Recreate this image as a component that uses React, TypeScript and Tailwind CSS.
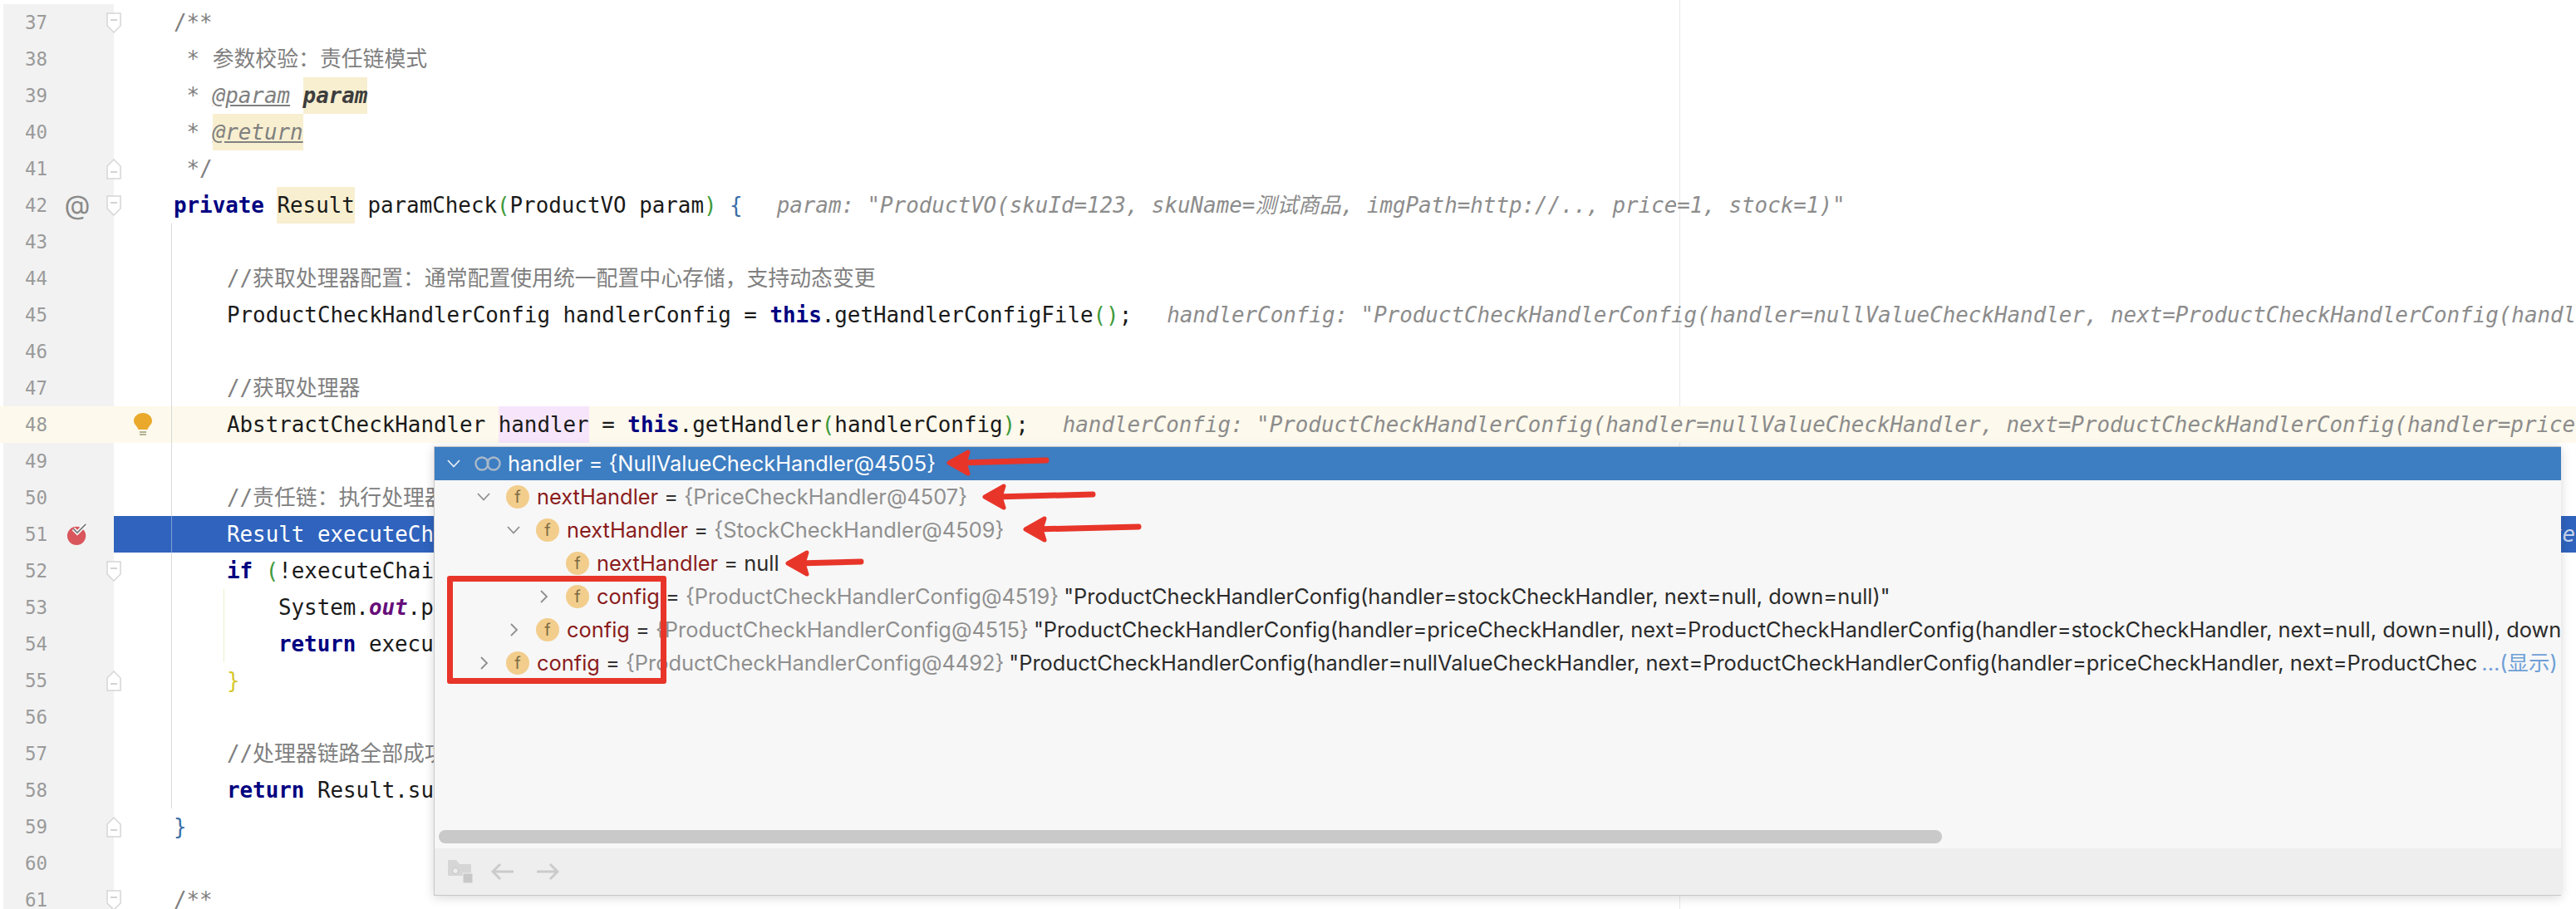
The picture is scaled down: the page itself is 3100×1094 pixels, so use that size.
import React from "react";

const mono = "font-['DejaVu_Sans_Mono','Noto_Sans_CJK_SC',monospace]";
const ui = "font-['Inter','Noto_Sans_CJK_SC',sans-serif]";

function Kw({ children }: { children: React.ReactNode }) {
  return <span className="font-bold text-[#000080]">{children}</span>;
}
function Cm({ children }: { children: React.ReactNode }) {
  return <span className="text-[#808080]">{children}</span>;
}
function Hint({ children, left = 41 }: { children: React.ReactNode; left?: number }) {
  return <span className={(left === 41 ? "ml-[41px]" : "ml-[42px]") + " italic text-[#8c8c8c]"}>{children}</span>;
}
function Green({ children }: { children: React.ReactNode }) {
  return <span className="text-[#3f9a3a]">{children}</span>;
}
function Hl({ children }: { children: React.ReactNode }) {
  return <span className="inline-block h-[44px] bg-[#f8efd0]">{children}</span>;
}

function Fold({ up }: { up?: boolean }) {
  return (
    <svg width="18" height="25" viewBox="0 0 18 25" className="absolute left-[128px] top-[10px]">
      <g transform={up ? "rotate(180 9 12.5)" : undefined}>
        <path d="M1 1H17V16L9 24L1 16Z" fill="#ffffff" stroke="#d6d6d6" strokeWidth="1.5" />
      </g>
      <path d={up ? "M5 16H13" : "M5 9H13"} stroke="#c4c4c4" strokeWidth="1.5" />
    </svg>
  );
}

function Bulb() {
  return (
    <svg width="24" height="30" viewBox="0 0 24 30">
      <path d="M12 1C5.5 1 1 5.5 1 10.5C1 15 5 16.5 6.5 21H17.5C19 16.5 23 15 23 10.5C23 5.5 18.5 1 12 1Z" fill="#eaa92b" />
      <path d="M8 24H16M8 27H16" stroke="#9a9a78" strokeWidth="1.6" />
    </svg>
  );
}

function Breakpoint() {
  return (
    <svg width="28" height="30" viewBox="0 0 28 30">
      <circle cx="13" cy="17" r="12" fill="#d9565c" />
      <path d="M9 8L14 13L25 2" fill="none" stroke="#ffffff" strokeWidth="5" />
      <path d="M9 8L14 13L25 2" fill="none" stroke="#7d7d7d" strokeWidth="2" />
    </svg>
  );
}

type Row = {
  n: number;
  fold?: "down" | "up";
  mark?: React.ReactNode;
  bulb?: boolean;
  guide?: boolean;
  inner?: boolean;
  bg?: string;
  indent: "a" | "b" | "c";
  code?: React.ReactNode;
};

const rows: Row[] = [
  { n: 37, fold: "down", indent: "a", code: <Cm>{"/**"}</Cm> },
  { n: 38, indent: "a", code: <Cm>{" * 参数校验：责任链模式"}</Cm> },
  {
    n: 39,
    indent: "a",
    code: (
      <Cm>
        {" * "}
        <span className="italic underline">@param</span>{" "}
        <span className="inline-block h-[44px] bg-[#f8efd0] font-bold italic text-[#3d3d3d]">param</span>
      </Cm>
    ),
  },
  {
    n: 40,
    indent: "a",
    code: (
      <Cm>
        {" * "}
        <span className="inline-block h-[44px] bg-[#f8efd0] italic underline">@return</span>
      </Cm>
    ),
  },
  { n: 41, fold: "up", indent: "a", code: <Cm>{" */"}</Cm> },
  {
    n: 42,
    fold: "down",
    mark: <span className={ui + " text-[32px] leading-[38px] text-[#8a8a8a]"}>@</span>,
    indent: "a",
    code: (
      <>
        <Kw>private</Kw> <Hl>Result</Hl> paramCheck<Green>(</Green>ProductVO param<Green>)</Green>{" "}
        <span className="text-[#3b6ea8]">{"{"}</span>
        <Hint>{'param: "ProductVO(skuId=123, skuName=测试商品, imgPath=http://.., price=1, stock=1)"'}</Hint>
      </>
    ),
  },
  { n: 43, guide: true, indent: "b" },
  { n: 44, guide: true, indent: "b", code: <Cm>//获取处理器配置：通常配置使用统一配置中心存储，支持动态变更</Cm> },
  {
    n: 45,
    guide: true,
    indent: "b",
    code: (
      <>
        ProductCheckHandlerConfig handlerConfig = <Kw>this</Kw>.getHandlerConfigFile<Green>()</Green>;
        <Hint left={42}>
          {'handlerConfig: "ProductCheckHandlerConfig(handler=nullValueCheckHandler, next=ProductCheckHandlerConfig(handler=priceCheckHandler'}
        </Hint>
      </>
    ),
  },
  { n: 46, guide: true, indent: "b" },
  { n: 47, guide: true, indent: "b", code: <Cm>//获取处理器</Cm> },
  {
    n: 48,
    guide: true,
    bulb: true,
    bg: "yellow",
    indent: "b",
    code: (
      <>
        AbstractCheckHandler <span className="inline-block h-[44px] bg-[#f7e6fb]">handler</span> = <Kw>this</Kw>
        .getHandler<Green>(</Green>handlerConfig<Green>)</Green>;
        <Hint>
          {'handlerConfig: "ProductCheckHandlerConfig(handler=nullValueCheckHandler, next=ProductCheckHandlerConfig(handler=priceCheckHandler'}
        </Hint>
      </>
    ),
  },
  { n: 49, guide: true, indent: "b" },
  { n: 50, guide: true, indent: "b", code: <Cm>//责任链：执行处理器链路</Cm> },
  {
    n: 51,
    guide: true,
    bg: "blue",
    mark: <Breakpoint />,
    indent: "b",
    code: (
      <span className="text-white">
        {'Result executeChainResult = HandlerClient.executeChain(handler, param);'}
        <span className="ml-[41px] italic text-[#c9d6ee]">
          {'handler: "NullValueCheckHandler@4505"  param: "ProductVO(skuId=123, price=1, stock=1)"  results: "HandlerExecute'}
        </span>
      </span>
    ),
  },
  {
    n: 52,
    fold: "down",
    guide: true,
    indent: "b",
    code: (
      <>
        <Kw>if</Kw> <Green>(</Green>!executeChainResult.isSuccess<Green>())</Green> {"{"}
      </>
    ),
  },
  {
    n: 53,
    guide: true,
    inner: true,
    indent: "c",
    code: (
      <>
        System.<span className="font-bold italic text-[#660e7a]">out</span>.println("pre check error");
      </>
    ),
  },
  {
    n: 54,
    guide: true,
    inner: true,
    indent: "c",
    code: (
      <>
        <Kw>return</Kw> executeChainResult;
      </>
    ),
  },
  { n: 55, fold: "up", guide: true, indent: "b", code: <span className="text-[#d6c82c]">{"}"}</span> },
  { n: 56, guide: true, indent: "b" },
  { n: 57, guide: true, indent: "b", code: <Cm>//处理器链路全部成功</Cm> },
  {
    n: 58,
    guide: true,
    indent: "b",
    code: (
      <>
        <Kw>return</Kw> Result.success();
      </>
    ),
  },
  { n: 59, fold: "up", indent: "a", code: <span className="text-[#3b6ea8]">{"}"}</span> },
  { n: 60, indent: "a" },
  { n: 61, fold: "down", indent: "a", code: <Cm>{"/**"}</Cm> },
];

function CodeRow({ r }: { r: Row }) {
  const yellow = r.bg === "yellow";
  const blue = r.bg === "blue";
  return (
    <div className={"relative flex h-[44px] shrink-0 " + (yellow ? "bg-[#fdf9ec]" : "")}>
      <div className={"ml-[4px] flex h-[44px] w-[133px] shrink-0 items-center " + (yellow ? "" : "bg-[#f2f2f2]")}>
        <span className="ml-[26px] w-[50px] text-[22.5px] leading-[44px] text-[#9a9a9a]">{r.n}</span>
        <span className="flex w-[26px] justify-center">{r.mark}</span>
      </div>
      <div className={"flex min-w-0 flex-1 " + (blue ? "bg-[#2f63bd]" : "")}>
        <div
          className={
            "flex h-[44px] w-[70px] shrink-0 items-center justify-center border-r " +
            (blue ? "border-[#7f9fd8]" : r.guide ? "border-[#d9d9d9]" : "border-transparent")
          }
        >
          {r.bulb ? <Bulb /> : null}
        </div>
        <div
          className={
            "whitespace-pre text-[25.85px] leading-[44px] text-[#1a1a1a] " +
            (r.indent === "a" ? "ml-[2px]" : r.indent === "b" ? "ml-[66px]" : "ml-[128px]")
          }
        >
          {r.code}
        </div>
      </div>
      {r.inner ? <div className="absolute bottom-0 left-[269px] top-0 w-px bg-[#f0eecb]" /> : null}
      {r.fold ? <Fold up={r.fold === "up"} /> : null}
    </div>
  );
}

function Chevron({ open, light }: { open?: boolean; light?: boolean }) {
  return (
    <svg width="18" height="18" viewBox="0 0 18 18" className="shrink-0">
      <path
        d={open ? "M2 5L9 12.5L16 5" : "M6 2L13 9L6 16"}
        fill="none"
        stroke={light ? "#e6eef8" : "#8e8e8e"}
        strokeWidth="1.8"
      />
    </svg>
  );
}

function FieldIcon() {
  return (
    <span className="flex h-[28px] w-[28px] shrink-0 items-center justify-center rounded-full bg-[#f2cd8c] text-[20px] leading-none text-[#7c6a45]">
      f
    </span>
  );
}

type Tree = { level: number; open?: boolean; leaf?: boolean; name: string; type?: string; value?: string; more?: boolean };

const tree: Tree[] = [
  { level: 0, open: true, name: "nextHandler", type: "{PriceCheckHandler@4507}" },
  { level: 1, open: true, name: "nextHandler", type: "{StockCheckHandler@4509}" },
  { level: 2, leaf: true, name: "nextHandler", value: "null" },
  {
    level: 2,
    name: "config",
    type: "{ProductCheckHandlerConfig@4519}",
    value: '"ProductCheckHandlerConfig(handler=stockCheckHandler, next=null, down=null)"',
  },
  {
    level: 1,
    name: "config",
    type: "{ProductCheckHandlerConfig@4515}",
    value:
      '"ProductCheckHandlerConfig(handler=priceCheckHandler, next=ProductCheckHandlerConfig(handler=stockCheckHandler, next=null, down=null), down',
  },
  {
    level: 0,
    name: "config",
    type: "{ProductCheckHandlerConfig@4492}",
    value: '"ProductCheckHandlerConfig(handler=nullValueCheckHandler, next=ProductCheckHandlerConfig(handler=priceCheckHandler, next=ProductChec',
    more: true,
  },
];

const indentClass = ["pl-[50px]", "pl-[86px]", "pl-[122px]"];

function TreeRow({ t }: { t: Tree }) {
  return (
    <div className={"flex h-[40px] items-center overflow-hidden whitespace-pre " + indentClass[t.level]}>
      <span className="flex w-[36px] shrink-0 items-center">{t.leaf ? null : <Chevron open={t.open} />}</span>
      <FieldIcon />
      <span className="ml-[9px] text-[#8a1c1c]">{t.name}</span>
      <span className="text-[#333333]"> = </span>
      {t.type ? <span className="text-[#8f8f8f]">{t.type}</span> : null}
      {t.value ? (
        <span className={(t.type ? "ml-[6px] " : "") + "text-[#2b2b2b]"}>{t.value}</span>
      ) : null}
      {t.more ? <span className="ml-[5px] shrink-0 text-[#6f9fd6]">...(显示)</span> : null}
    </div>
  );
}

function Popup() {
  return (
    <div
      className={
        ui +
        " absolute left-[522px] top-[537px] flex h-[541px] w-[2560px] flex-col overflow-hidden border-b-[1.5px] border-l border-t border-[#c8c8c8] bg-[#f7f7f7] text-[25.42px] shadow-[0_2px_12px_rgba(0,0,0,0.16)]"
      }
    >
      <div className="flex h-[40px] shrink-0 items-center whitespace-pre bg-[#3d7dc1] pl-[14px] text-white">
        <Chevron open light />
        <svg width="32" height="18" viewBox="0 0 32 18" className="ml-[16px] shrink-0">
          <ellipse cx="9" cy="9" rx="7.5" ry="7.5" fill="none" stroke="#a9b9ca" strokeWidth="2.4" />
          <ellipse cx="23" cy="9" rx="7.5" ry="7.5" fill="none" stroke="#a9b9ca" strokeWidth="2.4" />
        </svg>
        <span className="ml-[8px]">handler = {"{NullValueCheckHandler@4505}"}</span>
      </div>
      {tree.map((t, i) => (
        <TreeRow key={i} t={t} />
      ))}
      <div className="flex-1" />
      <div className="mb-[6px] ml-[5px] h-[16px] w-[1809px] shrink-0 rounded-full bg-[#c9c9c9]" />
      <div className="flex h-[56px] shrink-0 items-center bg-[#eeeeee] pl-[15px]">
        <svg width="32" height="30" viewBox="0 0 32 30" className="shrink-0">
          <path d="M1 1H11L15 6H29V20H1Z" fill="#d6d6d6" />
          <circle cx="10" cy="14" r="3.5" fill="#eeeeee" stroke="#c4c4c4" />
          <rect x="19" y="17" width="12" height="12" fill="#c8c8c8" stroke="#eeeeee" strokeWidth="1" />
        </svg>
        <svg width="28" height="22" viewBox="0 0 28 22" className="ml-[21px] shrink-0">
          <path d="M27 11H3M11 2L2 11L11 20" fill="none" stroke="#cbcbcb" strokeWidth="3" />
        </svg>
        <svg width="28" height="22" viewBox="0 0 28 22" className="ml-[26px] shrink-0">
          <path d="M1 11H25M17 2L26 11L17 20" fill="none" stroke="#cbcbcb" strokeWidth="3" />
        </svg>
      </div>
    </div>
  );
}

function Arrow({ x1, y1, x2, y2 }: { x1: number; y1: number; x2: number; y2: number }) {
  return (
    <g>
      <path d={`M${x1} ${y1}L${x2 + 12} ${y2}`} stroke="#e8352a" strokeWidth="7" strokeLinecap="round" fill="none" />
      <path
        d={`M${x2} ${y2}L${x2 + 23} ${y2 - 13}L${x2 + 19} ${y2}L${x2 + 23} ${y2 + 13}Z`}
        fill="#e8352a"
        stroke="#e8352a"
        strokeWidth="5"
        strokeLinejoin="round"
      />
    </g>
  );
}

export default function App() {
  return (
    <div className={mono + " relative h-[1094px] w-[3100px] overflow-hidden bg-white"}>
      <div className="absolute bottom-0 left-[2021px] top-0 w-px bg-[#e8e8e8]" />
      <div className="relative flex flex-col pt-[5px]">
        {rows.map((r) => (
          <CodeRow key={r.n} r={r} />
        ))}
      </div>
      <Popup />
      <div className="absolute left-[538px] top-[693px] h-[130px] w-[264px] rounded-[3px] border-[7px] border-[#e8352a]" />
      <svg width="3100" height="1094" viewBox="0 0 3100 1094" className="pointer-events-none absolute left-0 top-0">
        <Arrow x1={1259} y1={554} x2={1142} y2={557} />
        <Arrow x1={1315} y1={595} x2={1185} y2={598} />
        <Arrow x1={1370} y1={634} x2={1234} y2={637} />
        <Arrow x1={1036} y1={676} x2={948} y2={678} />
      </svg>
    </div>
  );
}
